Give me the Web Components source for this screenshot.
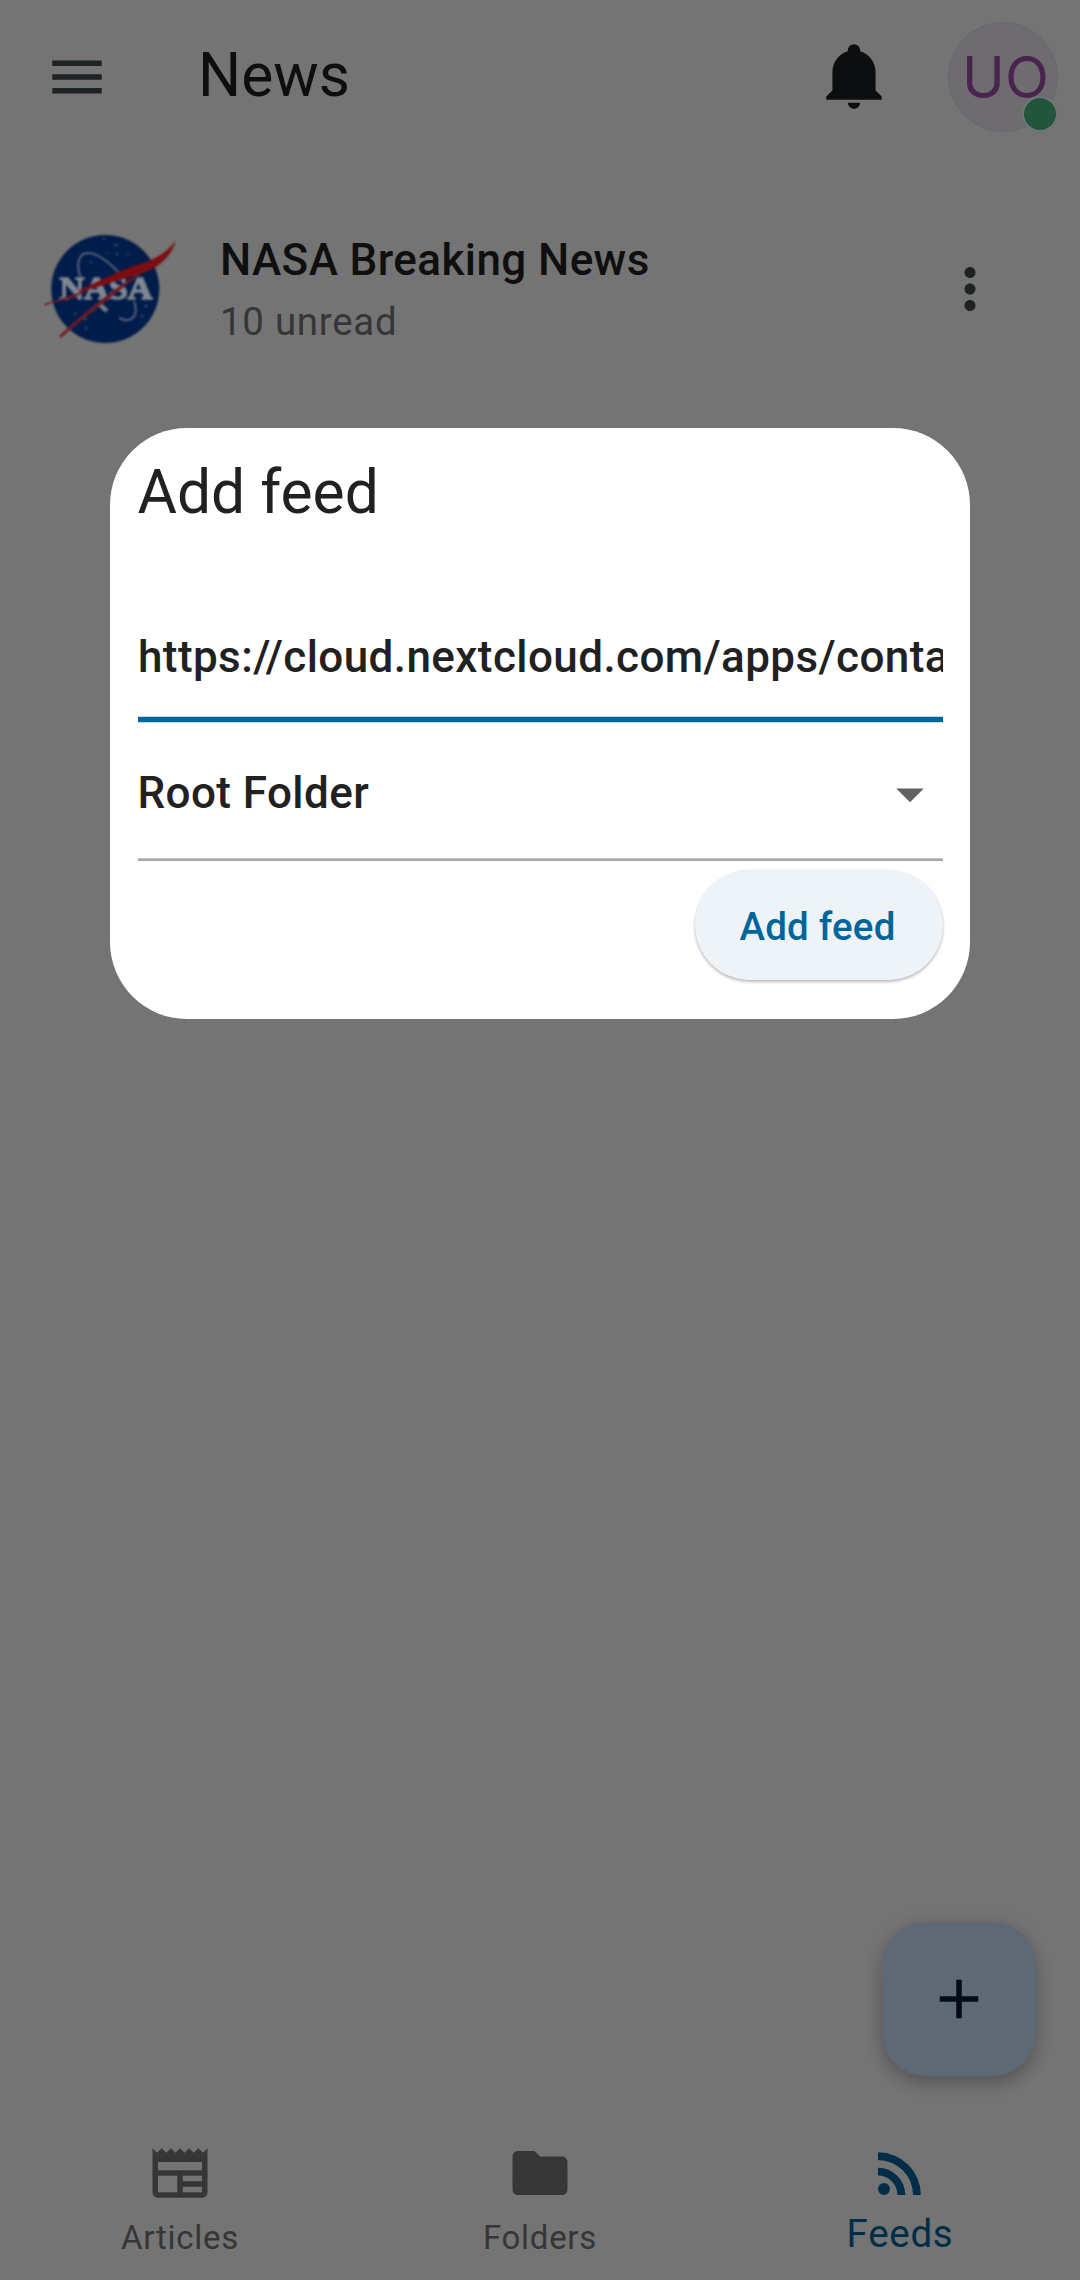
<!DOCTYPE html>
<html lang="en">
<head>
<meta charset="utf-8">
<title>News</title>
<style>
html,body{margin:0;height:2280px;background:#747474;overflow:hidden}
body{font-family:Roboto,"Liberation Sans",sans-serif}
</style>
</head>
<body>
<news-app>
  <app-bar slot="top" heading="News" initials="UO"></app-bar>
  <feed-row slot="content" heading="NASA Breaking News" note="10 unread"></feed-row>
  <add-fab slot="action"></add-fab>
  <nav-bar slot="bottom">
    <nav-item icon="articles">Articles</nav-item>
    <nav-item icon="folders">Folders</nav-item>
    <nav-item icon="feeds" active>Feeds</nav-item>
  </nav-bar>
  <feed-dialog slot="dialog" heading="Add feed">
    <text-field>https://cloud.nextcloud.com/apps/conta</text-field>
    <select-field>Root Folder</select-field>
    <pill-button>Add feed</pill-button>
  </feed-dialog>
</news-app>
<script>
const ICONS = {
  menu: 'M3 18h18v-2H3v2zm0-5h18v-2H3v2zm0-7v2h18V6H3z',
  bell: 'M21,19V20H3V19L5,17V11C5,7.9 7.03,5.17 10,4.29C10,4.19 10,4.1 10,4A2,2 0 0,1 12,2A2,2 0 0,1 14,4C14,4.1 14,4.19 14,4.29C16.97,5.17 19,7.9 19,11V17L21,19M14,21A2,2 0 0,1 12,23A2,2 0 0,1 10,21',
  more: 'M12 8c1.1 0 2-.9 2-2s-.9-2-2-2-2 .9-2 2 .9 2 2 2zm0 2c-1.1 0-2 .9-2 2s.9 2 2 2 2-.9 2-2-.9-2-2-2zm0 6c-1.1 0-2 .9-2 2s.9 2 2 2 2-.9 2-2-.9-2-2-2z',
  add: 'M19 13h-6v6h-2v-6H5v-2h6V5h2v6h6v2z',
  drop: 'M7 10l5 5 5-5z',
  articles: 'M20 11H4V8H20M20 15H13V13H20M20 19H13V17H20M11 19H4V13H11M20.33 4.67L18.67 3L17 4.67L15.33 3L13.67 4.67L12 3L10.33 4.67L8.67 3L7 4.67L5.33 3L3.67 4.67L2 3V19C2 20.1 2.9 21 4 21H20C21.1 21 22 20.1 22 19V3L20.33 4.67Z',
  folders: 'M10 4H4c-1.1 0-1.99.9-1.99 2L2 18c0 1.1.9 2 2 2h16c1.1 0 2-.9 2-2V8c0-1.1-.9-2-2-2h-8l-2-2z',
  feeds: 'M6.18 15.64a2.18 2.18 0 1 1 0 4.36a2.18 2.18 0 1 1 0-4.36M4 4.44A15.56 15.56 0 0 1 19.56 20h-2.83A12.73 12.73 0 0 0 4 7.27V4.44m0 5.66a9.9 9.9 0 0 1 9.9 9.9h-2.83A7.07 7.07 0 0 0 4 12.93V10.1z'
};
const icon = (name, size = 66) => `<svg width="${size}" height="${size}" viewBox="0 0 24 24" fill="currentColor" fill-rule="evenodd" aria-hidden="true"><path d="${ICONS[name]}"/></svg>`;
const define = (tag, render) => customElements.define(tag, class extends HTMLElement {
  connectedCallback() {
    if (this.shadowRoot) return;
    this.attachShadow({ mode: 'open' }).innerHTML =
      '<style>*{box-sizing:border-box}svg{display:block;flex:none}</style>' + render(this);
  }
});

define('news-app', () => `<style>
  :host{display:block;width:1080px;height:2280px;position:relative;overflow:hidden;background:#747474}
  .screen{display:flex;flex-direction:column;height:100%}
  main{flex:1;display:flex;flex-direction:column}
  .action{margin:auto 44px 50px auto}
  .overlay{position:absolute;inset:428px 110px auto 110px}
  </style>
  <div class="screen"><slot name="top"></slot><main><slot name="content"></slot><div class="action"><slot name="action"></slot></div></main><slot name="bottom"></slot></div>
  <div class="overlay"><slot name="dialog"></slot></div>`);

define('app-bar', el => `<style>
  :host{display:flex;align-items:center;height:154px;padding:0 22px 0 44px;color:#0c0e0f}
  .menu{color:#1d2224}
  h1{flex:1;margin:0 0 0 88px;font:400 60.5px/72px Roboto,sans-serif;padding-bottom:2px}
  .bell{margin:-4px 57px 0 0}
  .avatar{position:relative;width:110px;height:110px;border-radius:50%;background:#6f6c70;border:1px solid #626973;color:#48244e;font:400 57.5px/108px Inter,Roboto,sans-serif;text-align:center;white-space:nowrap;padding-left:5px}
  .dot{position:absolute;left:72.5px;top:72.5px;width:36px;height:36px;border-radius:50%;background:#21553c;border:2px solid #787a79;outline:1px solid #6b716d;outline-offset:-1px}
  </style>
  <div class="menu">${icon('menu')}</div><h1>${el.getAttribute('heading')}</h1><div class="bell">${icon('bell', 74)}</div>
  <div class="avatar"><span>${el.getAttribute('initials')}</span><div class="dot"></div></div>`);

define('nasa-logo', () => `<style>:host{display:block;width:132px;height:132px;border-radius:16px;background:#757575;overflow:hidden}
  .art{filter:blur(.8px)}
  text{font:bold 32px "Liberation Serif",serif;fill:#808792;stroke:#808792;stroke-width:1.5}</style>
  <svg width="132" height="132" viewBox="0 0 132 132"><g class="art">
  <circle cx="61.3" cy="66" r="54" fill="#001c4a"/>
  <g fill="#35486a"><circle cx="60" cy="16" r="1.3"/><circle cx="72" cy="22" r="1.6"/><circle cx="63" cy="30" r="1"/><circle cx="73" cy="31" r="1.3"/><circle cx="47" cy="39" r="1.2"/><circle cx="31" cy="91" r="1.2"/><circle cx="41" cy="96" r="1.6"/><circle cx="42" cy="105" r="1.5"/><circle cx="102" cy="83" r="1.6"/><circle cx="98" cy="93" r="1.6"/><circle cx="84" cy="32" r="1"/><circle cx="50" cy="88" r="1"/></g>
  <path d="M38 58C32 45 33 31 43 30C55 29 69 43 79 54M90 78C93 86 92 94 87 96C84 98 79 97 75 95" fill="none" stroke="#56637a" stroke-width="2"/>
  <path d="M54 80L63 88" stroke="#737b88" stroke-width="4.5"/>
  <text x="15.5" y="76" textLength="93" lengthAdjust="spacingAndGlyphs">NASA</text>
  <path d="M34 68C60 55 84 44 102 39C116 34 127 25 132 17C128 32 116 45 96 51C72 58 50 65 36 69Z" fill="#7b0d11"/>
  <path d="M0 81C16 76 31 71 47 66L29 75C19 77 9 79 0 83Z" fill="#78181f"/>
  <path d="M15 113C43 87 73 63 106 43C76 68 43 91 17 115Z" fill="#741a25"/>
  </g></svg>`);

define('feed-row', el => `<style>
  :host{display:flex;align-items:center;margin-top:58px;height:154px;padding:0 77px 0 44px}
  .text{flex:1;margin-left:44px;padding-top:6px}
  .t{font:500 44px/60px Roboto,sans-serif;color:#0f0f0f;letter-spacing:.41px}
  .n{font:400 38.5px/64px Roboto,sans-serif;color:#363636;letter-spacing:.69px}
  .more{color:#1d2224}
  </style><nasa-logo></nasa-logo><div class="text"><div class="t"><span>${el.getAttribute('heading')}</span></div><div class="n"><span>${el.getAttribute('note')}</span></div></div><div class="more">${icon('more')}</div>`);

define('add-fab', () => `<style>:host{display:grid;place-items:center;width:154px;height:154px;border-radius:44px;background:#5f6975;color:#000c15;box-shadow:0 8px 16px rgba(0,0,0,.2),0 2px 22px rgba(0,0,0,.08)}</style>${icon('add')}`);

define('nav-bar', () => `<style>:host{display:grid;grid-template-columns:repeat(3,1fr);height:154px}</style><slot></slot>`);
define('nav-item', el => `<style>
  :host{display:flex;flex-direction:column;align-items:center;padding-top:14px;color:#363636;font-size:33px;line-height:44px;letter-spacing:.7px}
  span{margin-top:10px}
  :host([active]){color:#002e49;font-size:38.5px}
  :host([active]) span{margin-top:6px}
  </style>${icon(el.getAttribute('icon'))}<span><slot></slot></span>`);

define('feed-dialog', el => `<style>
  :host{display:flex;flex-direction:column;height:591px;border-radius:77px;background:#fff;padding:0 27.5px 0;color:#212121}
  h2{margin:0;padding-top:29px;font:400 60.5px/72px Roboto,sans-serif;height:182px}
  </style><h2><span>${el.getAttribute('heading')}</span></h2><slot></slot>`);
define('text-field', () => `<style>
  :host{display:block;height:107px;padding-left:.5px;border-bottom:5px solid #00659b;box-shadow:0 1px #bfd8e6,inset 0 -1px #bfd8e6;font:500 44px/94px Roboto,sans-serif;white-space:nowrap;overflow:hidden;letter-spacing:.41px}</style><slot></slot>`);
define('select-field', () => `<style>
  :host{display:flex;justify-content:space-between;align-items:center;height:132px;padding-top:5px;border-bottom:2px solid #a8a8a8;box-shadow:inset 0 -1px #c8c8c8;font:500 44px/60px Roboto,sans-serif;letter-spacing:.41px}
  div{color:#616161;margin-top:2px}</style><span><slot></slot></span><div>${icon('drop')}</div>`);
define('pill-button', () => `<style>
  :host{display:grid;place-items:center;align-self:flex-end;width:246px;height:107px;padding:3px 2px 0 0;margin-top:9px;border-radius:55px;background:#eef3f8;color:#00659b;font:500 38.5px/60px Roboto,sans-serif;letter-spacing:.2px;box-shadow:0 2px 3px rgba(0,0,0,.25),0 0 2px rgba(0,0,0,.08)}</style><span><slot></slot></span>`);
</script>
</body>
</html>
